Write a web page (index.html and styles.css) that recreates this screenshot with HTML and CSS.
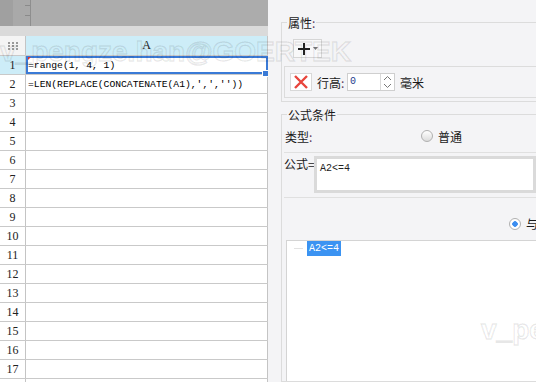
FILE: index.html
```html
<!DOCTYPE html>
<html lang="zh-CN">
<head>
    <meta charset="UTF-8">
    <title>条件属性</title>
    <link rel="stylesheet" href="styles.css">
</head>
<body>
    <div class="app">
        <div class="sheet">
            <div class="sheet-toolbar">
                <div class="tb-grip"></div>
                <div class="tb-ruler"><span class="tick"></span><span class="tick tick-2"></span></div>
                <div class="tb-fill"></div>
            </div>
            <div class="sheet-band"></div>
            <div class="grid">
                <div class="row head">
                    <div class="rn corner"><span class="dots"><i></i><i></i><i></i><i></i><i></i><i></i><i></i><i></i><i></i></span></div>
                    <div class="cell">A</div>
                </div>
                <div class="row active">
                    <div class="rn">1</div>
                    <div class="cell selected"><span class="note"></span>=range(1, 4, 1)</div>
                </div>
                <div class="row"><div class="rn">2</div><div class="cell">=LEN(REPLACE(CONCATENATE(A1),',',''))</div></div>
                <div class="row"><div class="rn">3</div><div class="cell"></div></div>
                <div class="row"><div class="rn">4</div><div class="cell"></div></div>
                <div class="row"><div class="rn">5</div><div class="cell"></div></div>
                <div class="row"><div class="rn">6</div><div class="cell"></div></div>
                <div class="row"><div class="rn">7</div><div class="cell"></div></div>
                <div class="row"><div class="rn">8</div><div class="cell"></div></div>
                <div class="row"><div class="rn">9</div><div class="cell"></div></div>
                <div class="row"><div class="rn">10</div><div class="cell"></div></div>
                <div class="row"><div class="rn">11</div><div class="cell"></div></div>
                <div class="row"><div class="rn">12</div><div class="cell"></div></div>
                <div class="row"><div class="rn">13</div><div class="cell"></div></div>
                <div class="row"><div class="rn">14</div><div class="cell"></div></div>
                <div class="row"><div class="rn">15</div><div class="cell"></div></div>
                <div class="row"><div class="rn">16</div><div class="cell"></div></div>
                <div class="row"><div class="rn">17</div><div class="cell"></div></div>
                <div class="row"><div class="rn"></div><div class="cell"></div></div>
            </div>
        </div>

        <div class="panel">
            <div class="group prop-group">
                <div class="group-title">属性<span class="colon">:</span></div>
                <div class="add-btn">
                    <svg width="14" height="14" viewBox="0 0 14 14"><path d="M7 1v12M1 7h12" stroke="#222" stroke-width="2"/></svg>
                    <svg class="caret" width="5" height="3" viewBox="0 0 5 3"><path d="M0 0h5L2.5 3z" fill="#777"/></svg>
                </div>
                <div class="size-box">
                    <div class="del-btn">
                        <svg width="14" height="14" viewBox="0 0 14 14"><path d="M1 1l12 12M13 1L1 13" stroke="#e8453c" stroke-width="2.4"/></svg>
                    </div>
                    <div class="size-label">行高<span class="colon">:</span></div>
                    <div class="num-input">
                        <span class="num-val">0</span>
                        <span class="spin">
                            <svg width="9" height="6" viewBox="0 0 9 6"><path d="M1 5l3.5-3.5L8 5" fill="none" stroke="#777"/></svg>
                            <svg width="9" height="6" viewBox="0 0 9 6"><path d="M1 1l3.5 3.5L8 1" fill="none" stroke="#777"/></svg>
                        </span>
                    </div>
                    <div class="unit">毫米</div>
                </div>
            </div>

            <div class="group cond-group">
                <div class="group-title">公式条件</div>
                <div class="cond-row type-row">
                    <div class="type-label">类型<span class="colon">:</span></div>
                    <span class="radio"></span>
                    <span>普通</span>
                </div>
                <div class="cond-row formula-row">
                    <div class="formula-label">公式=</div>
                    <div class="formula-box">A2&lt;=4</div>
                </div>
                <div class="logic-row">
                    <span class="radio checked"></span>
                    <span>与</span>
                </div>
                <div class="tree-box">
                    <span class="tree-line"></span>
                    <span class="tree-node">A2&lt;=4</span>
                </div>
            </div>
        </div>
    </div>

    <div class="watermark wm-1">v_pengze.han@GOERTEK</div>
    <div class="watermark wm-2">v_pengze.han@GOERTEK</div>
</body>
</html>
```

FILE: styles.css
```css
* {margin:0;padding:0;box-sizing:border-box;}
body {width:536px;height:382px;overflow:hidden;position:relative;background:#fff;font-family:"Noto Sans CJK SC",sans-serif;font-size:12px;color:#1a1a1a;}
.app {display:flex;height:382px;}

/* sheet */
.sheet {width:268px;flex:none;overflow:hidden;}
.sheet-toolbar {height:26px;display:flex;background:#acacac;}
.tb-grip {width:13px;background:#a0a0a0;}
.tb-ruler {width:18px;background:#a9a9a9;border-right:1px solid #8e8e8e;display:flex;flex-direction:column;}
.tick {display:block;width:5px;height:1px;background:#8a8a8a;margin:5px 0 0 12px;}
.tick-2 {margin-top:9px;}
.tb-fill {flex:1;}
.sheet-band {height:10px;background:#dadada;}
.row {display:flex;height:19px;border-bottom:1px solid #c9c9c9;}
.row.head {height:20px;background:#cdedf8;}
.rn {width:26px;flex:none;border-right:1px solid #c4c4c4;background:#fff;display:flex;align-items:center;justify-content:center;font-family:"Liberation Serif",serif;font-size:12px;color:#222;}
.row.head .rn {background:#f4f4f4;}
.row.active .rn {background:#cdedf8;}
.cell {width:242px;flex:none;border-right:1px solid #c4c4c4;padding-left:2px;display:flex;align-items:center;white-space:nowrap;position:relative;font-family:"Liberation Mono",monospace;font-size:9.7px;color:#000;}
.row.head .cell {justify-content:center;padding:0;font-family:"Liberation Serif",serif;font-size:12px;color:#222;}
.dots {display:grid;grid-template-columns:repeat(3,2px);gap:1px 2px;}
.dots i {width:2px;height:2px;background:#9a9a9a;}
.selected::after {content:"";position:absolute;left:0;top:0;right:-1px;bottom:0;border:2px solid #3a7ad6;}
.selected::before {content:"";position:absolute;right:-2px;bottom:-3px;width:5px;height:5px;background:#3a7ad6;border:1px solid #fff;z-index:2;}
.note {position:absolute;left:2px;top:1px;width:0;height:0;border-top:3px solid #d33;border-right:3px solid transparent;z-index:2;}

/* panel */
.panel {flex:1;background:#f4f4f6;padding:22px 0 0 13px;overflow:hidden;display:flex;flex-direction:column;}
.group {border:1px solid #dcdcdc;border-right:none;position:relative;}
.group-title {position:absolute;left:5px;top:-8px;padding:0 1px;background:#f4f4f6;line-height:15px;white-space:nowrap;}
.colon {color:#5a3a5a;}
.prop-group {height:80px;flex:none;}
.add-btn {margin:16px 0 0 11px;width:29px;height:19px;border:1px solid #d6d6d6;background:#f8f8f9;display:flex;align-items:center;padding-left:3px;gap:2px;}
.size-box {margin:8px 0 0 2px;height:32px;border:1px solid #dcdcdc;border-right:none;display:flex;align-items:center;padding-left:5px;}
.del-btn {width:22px;height:18px;border:1px solid #d8d8d8;background:#fff;display:flex;align-items:center;justify-content:center;}
.size-label {width:35px;padding-left:5px;white-space:nowrap;}
.num-input {width:48px;height:18px;border:1px solid #cfcfcf;background:#fff;display:flex;}
.num-val {flex:1;padding-left:2px;font-family:"Liberation Mono",monospace;font-size:10px;line-height:16px;color:#1b3a8c;}
.spin {width:14px;border-left:1px solid #dadada;display:flex;flex-direction:column;align-items:center;justify-content:space-around;}
.unit {margin-left:5px;}

.cond-group {flex:1;margin-top:12px;display:flex;flex-direction:column;}
.cond-row {margin-left:2px;border-bottom:1px solid #e0e0e0;}
.type-row {height:38px;display:flex;align-items:center;padding-top:5px;}
.type-label {width:137px;padding-left:1px;}
.radio {width:12px;height:12px;flex:none;border-radius:50%;border:1px solid #b0b0b0;background:linear-gradient(#fff,#dcdcdc);margin-right:5px;}
.radio.checked {background:radial-gradient(circle,#3b8df0 0 2.5px,#fff 3px);}
.formula-row {height:45px;display:flex;align-items:flex-start;padding-top:3px;}
.formula-label {width:30px;flex:none;line-height:15px;white-space:nowrap;}
.formula-box {flex:1;height:37px;border:3px solid #dadada;background:#fff;padding:3px 0 0 3px;font-family:"Liberation Mono",monospace;font-size:10px;line-height:14px;color:#222;}
.logic-row {height:42px;flex:none;display:flex;align-items:flex-start;padding:20px 0 0 227px;white-space:nowrap;line-height:12px;}
.tree-box {flex:1;margin-left:4px;border:1px solid #d4d4d4;border-right:none;border-bottom:none;background:#fff;display:flex;align-items:flex-start;}
.tree-line {width:9px;height:1px;background:#e2e2e2;margin:7px 4px 0 7px;}
.tree-node {background:#3b93f2;color:#fff;padding:0 2px;font-family:"Liberation Mono",monospace;font-size:10px;line-height:15px;}

/* watermark */
.watermark {position:absolute;font-family:"Liberation Sans",sans-serif;font-weight:bold;font-size:28px;line-height:28px;color:transparent;-webkit-text-stroke:1.5px rgba(0,0,0,0.09);white-space:nowrap;pointer-events:none;}
.wm-1 {left:0;top:38px;}
.wm-2 {left:481px;top:316px;}
```
